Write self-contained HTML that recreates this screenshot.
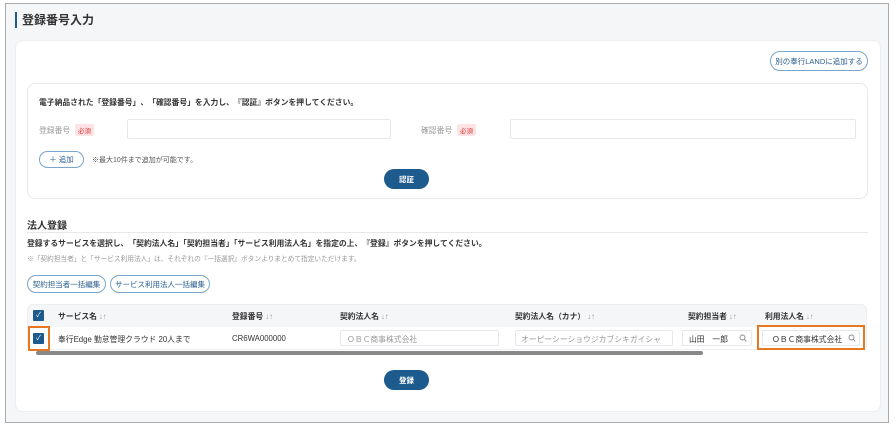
<!DOCTYPE html>
<html><head><meta charset="utf-8"><style>
*{box-sizing:border-box;margin:0;padding:0}
body{width:896px;height:427px;background:#fff;font-family:"Liberation Sans","Noto Sans CJK JP",sans-serif;color:#333;position:relative;overflow:hidden}
.a{position:absolute}
.frame{left:5px;top:3px;width:884px;height:420px;border:1px solid #aaa;background:#f5f6f8}
.card{left:15px;top:40px;width:866px;height:372px;background:#fff;border-radius:8px;border:1px solid #eceef1}
.inner{left:27px;top:83px;width:841px;height:116px;border:1px solid #e6e8eb;border-radius:8px;background:#fff}
.pill{border:1px solid #7aa5cc;border-radius:12px;color:#2a5f8f;font-size:7.5px;display:flex;align-items:center;justify-content:center;background:#fff;white-space:nowrap}
.btn{background:#1d5b8f;color:#fff;border-radius:11px;font-size:7.5px;font-weight:bold;display:flex;align-items:center;justify-content:center}
.t{font-size:7.8px;white-space:nowrap}
.b{font-weight:bold}
.badge{background:#fde3e3;color:#d33;font-size:6.5px;padding:1px 3px;border-radius:2px}
.inp{border:1px solid #e6e8eb;border-radius:2px;background:#fff}
.cb{width:11px;height:11px;background:#1d5b8f;border-radius:1px;color:#fff;font-size:7px;line-height:11px;text-align:center}
.g{color:#999}
svg.s{position:absolute;width:8px;height:8px}
</style></head><body>
<div class="a frame"></div>
<div class="a" style="left:15px;top:12px;width:2px;height:16px;background:#1d5b8f"></div>
<div class="a t b" style="left:22px;top:11px;font-size:12px">登録番号入力</div>
<div class="a card"></div>
<div class="a pill" style="left:770px;top:51px;width:98px;height:20px">別の奉行LANDに追加する</div>
<div class="a inner"></div>
<div class="a t b" style="left:39px;top:97px">電子納品された「登録番号」、「確認番号」を入力し、『認証』ボタンを押してください。</div>
<div class="a t g" style="left:39px;top:125px">登録番号</div>
<div class="a badge" style="left:75px;top:124px">必須</div>
<div class="a inp" style="left:127px;top:119px;width:264px;height:20px"></div>
<div class="a t g" style="left:421px;top:125px">確認番号</div>
<div class="a badge" style="left:457px;top:124px">必須</div>
<div class="a inp" style="left:510px;top:119px;width:346px;height:20px"></div>
<div class="a pill" style="left:39px;top:151px;width:45px;height:17px">＋ 追加</div>
<div class="a t" style="left:92px;top:155px;font-size:7px;color:#555">※最大10件まで追加が可能です。</div>
<div class="a btn" style="left:384px;top:169px;width:45px;height:20px">認証</div>
<div class="a t b" style="left:27px;top:217px;font-size:10px">法人登録</div>
<div class="a" style="left:27px;top:232px;width:841px;height:1px;background:#e6e8eb"></div>
<div class="a t b" style="left:27px;top:238px">登録するサービスを選択し、「契約法人名」「契約担当者」「サービス利用法人名」を指定の上、『登録』ボタンを押してください。</div>
<div class="a t g" style="left:27px;top:253px;font-size:6.7px">※「契約担当者」と「サービス利用法人」は、それぞれの『一括選択』ボタンよりまとめて指定いただけます。</div>
<div class="a pill" style="left:27px;top:275px;width:79px;height:18px">契約担当者一括編集</div>
<div class="a pill" style="left:110px;top:275px;width:100px;height:18px">サービス利用法人一括編集</div>
<div class="a" style="left:27px;top:304px;width:840px;height:46px;border:1px solid #eceef1;border-radius:6px;background:#f5f6f8"></div>
<div class="a" style="left:28px;top:327px;width:838px;height:22px;background:#fff"></div>
<div class="a cb" style="left:33px;top:310px">✓</div>
<div class="a t b" style="left:58px;top:311px">サービス名 <span class="g">↓↑</span></div>
<div class="a t b" style="left:232px;top:311px">登録番号 <span class="g">↓↑</span></div>
<div class="a t b" style="left:340px;top:311px">契約法人名 <span class="g">↓↑</span></div>
<div class="a t b" style="left:515px;top:311px">契約法人名（カナ） <span class="g">↓↑</span></div>
<div class="a t b" style="left:688px;top:311px">契約担当者 <span class="g">↓↑</span></div>
<div class="a t b" style="left:765px;top:311px">利用法人名 <span class="g">↓↑</span></div>
<div class="a cb" style="left:33px;top:333px">✓</div>
<div class="a" style="left:28px;top:326px;width:22px;height:25px;border:2px solid #e87722"></div>
<div class="a t" style="left:58px;top:334px">奉行Edge 勤怠管理クラウド 20人まで</div>
<div class="a t" style="left:232px;top:334px">CR6WA000000</div>
<div class="a inp" style="left:340px;top:330px;width:159px;height:16px"></div>
<div class="a t g" style="left:347px;top:334px">ＯＢＣ商事株式会社</div>
<div class="a inp" style="left:515px;top:330px;width:158px;height:16px"></div>
<div class="a t g" style="left:521px;top:334px">オーピーシーショウジカブシキガイシャ</div>
<div class="a inp" style="left:682px;top:330px;width:70px;height:16px"></div>
<div class="a t" style="left:689px;top:334px">山田　一郎</div>
<svg class="s" style="left:739px;top:334px" viewBox="0 0 8 8"><circle cx="3.5" cy="3.5" r="2.5" fill="none" stroke="#888" stroke-width="0.9"/><path d="M5.3 5.3L7.3 7.3" stroke="#888" stroke-width="0.9"/></svg>
<div class="a inp" style="left:762px;top:330px;width:98px;height:16px"></div>
<div class="a t" style="left:772px;top:334px">ＯＢＣ商事株式会社</div>
<svg class="s" style="left:848px;top:334px" viewBox="0 0 8 8"><circle cx="3.5" cy="3.5" r="2.5" fill="none" stroke="#888" stroke-width="0.9"/><path d="M5.3 5.3L7.3 7.3" stroke="#888" stroke-width="0.9"/></svg>
<div class="a" style="left:757px;top:325px;width:108px;height:25px;border:2px solid #e87722"></div>
<div class="a" style="left:36px;top:351px;width:667px;height:4px;background:#888;border-radius:2px"></div>
<div class="a btn" style="left:384px;top:370px;width:45px;height:20px">登録</div>
</body></html>
